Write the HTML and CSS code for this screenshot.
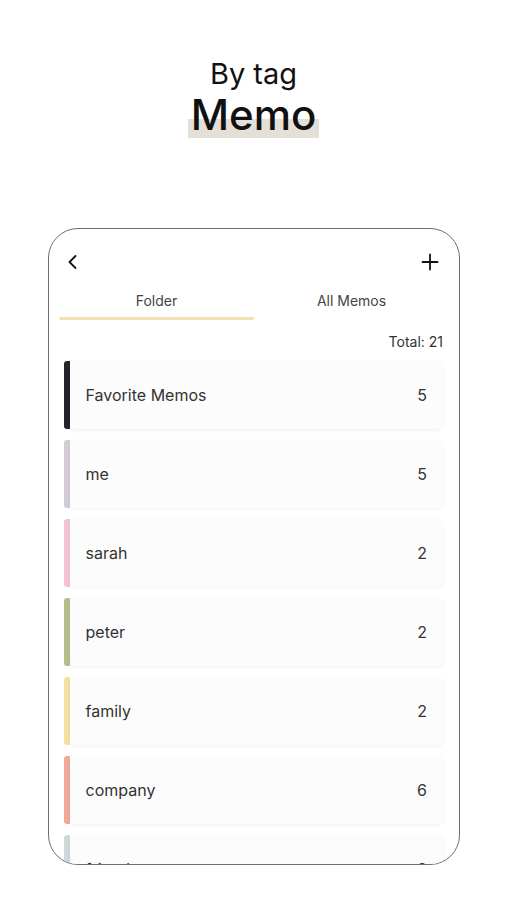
FILE: index.html
```html
<!DOCTYPE html>
<html lang="en">
<head>
<meta charset="UTF-8">
<meta name="viewport" content="width=device-width, initial-scale=1.0">
<title>By tag Memo</title>
<link rel="stylesheet" href="styles.css">
</head>
<body>
  <div class="hero">
    <div class="hero-sub">By tag</div>
    <div class="hero-title"><span>Memo</span></div>
  </div>

  <div class="device">
    <div class="topbar">
      <svg class="icon" width="24" height="24" viewBox="0 0 24 24">
        <path d="M14.5 6 L8.5 12 L14.5 18" fill="none" stroke="#111" stroke-width="1.8" stroke-linecap="round" stroke-linejoin="round"/>
      </svg>
      <svg class="icon" width="24" height="24" viewBox="0 0 24 24">
        <path d="M12 4.5 V19.5 M4.5 12 H19.5" fill="none" stroke="#111" stroke-width="1.8" stroke-linecap="round"/>
      </svg>
    </div>

    <div class="tabs">
      <div class="tab active">Folder</div>
      <div class="tab">All Memos</div>
    </div>

    <div class="total">Total: 21</div>

    <div class="list">
      <div class="item"><span class="bar c-black"></span><div class="card"><span>Favorite Memos</span><span>5</span></div></div>
      <div class="item"><span class="bar c-lavender"></span><div class="card"><span>me</span><span>5</span></div></div>
      <div class="item"><span class="bar c-pink"></span><div class="card"><span>sarah</span><span>2</span></div></div>
      <div class="item"><span class="bar c-olive"></span><div class="card"><span>peter</span><span>2</span></div></div>
      <div class="item"><span class="bar c-yellow"></span><div class="card"><span>family</span><span>2</span></div></div>
      <div class="item"><span class="bar c-salmon"></span><div class="card"><span>company</span><span>6</span></div></div>
      <div class="item"><span class="bar c-grey"></span><div class="card"><span>friends</span><span>2</span></div></div>
    </div>
  </div>
</body>
</html>
```

FILE: styles.css
```css
body {
  margin: 0;
  padding: 0;
  background-color: #ffffff;
  font-family: Inter, "Noto Sans", sans-serif;
  color: #1a1a1a;
}

.hero {
  padding-top: 56px;
  text-align: center;
}

.hero-sub {
  font-size: 29px;
  line-height: 36px;
  color: #111111;
}

.hero-title {
  font-size: 42px;
  line-height: 46px;
  font-weight: 500;
  color: #111111;
}

.hero-title span {
  display: inline-block;
  padding: 0 3px;
  background: linear-gradient(transparent 58%, #e4e0d8 58%); /* beige marker under text */
}

.device {
  margin: 90px 0 0 48px;
  width: 410px;
  height: 635px;
  border: 1.5px solid #6f6f6f;
  border-radius: 30px;
  overflow: hidden;
}

.topbar {
  display: flex;
  justify-content: space-between;
  padding: 21px 17px 17px 12px;
}

.icon {
  display: block;
}

.tabs {
  display: flex;
  padding: 0 10px;
}

.tab {
  flex: 1;
  text-align: center;
  font-size: 14px;
  line-height: 20px;
  color: #444444;
  padding-bottom: 6px;
  border-bottom: 3px solid transparent;
}

.tab.active {
  border-bottom-color: #f3dfb2;
  border-radius: 0 0 2px 2px;
}

.total {
  text-align: right;
  font-size: 14px;
  line-height: 20px;
  color: #333333;
  padding: 12px 16px 0 0;
}

.list {
  display: flex;
  flex-direction: column;
  gap: 11px;
  padding: 9px 16px 0 14.5px;
}

.item {
  display: flex;
  height: 68px;
}

.bar {
  width: 6px;
  border-radius: 3px 0 0 3px;
}

.card {
  flex: 1;
  display: flex;
  justify-content: space-between;
  align-items: center;
  padding: 0 16px;
  background-color: #fcfcfc;
  border-radius: 0 6px 6px 0;
  box-shadow: 0 1px 4px rgba(0, 0, 0, 0.06);
  font-size: 16px;
  color: #333333;
}

.c-black { background-color: #24242c; }
.c-lavender { background-color: #d3ccd8; }
.c-pink { background-color: #f2c5d0; }
.c-olive { background-color: #b6bd8f; }
.c-yellow { background-color: #f5e0a2; }
.c-salmon { background-color: #f1a999; }
.c-grey { background-color: #cfd9db; }
```
